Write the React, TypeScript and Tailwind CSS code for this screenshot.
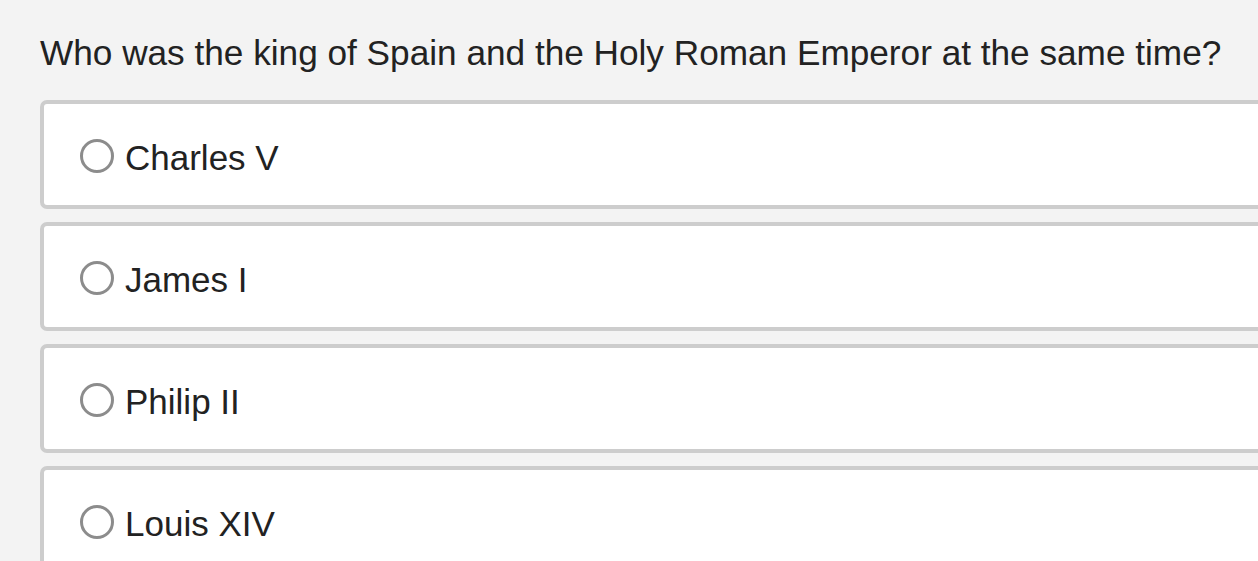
import React from 'react';

const options = ['Charles V', 'James I', 'Philip II', 'Louis XIV'];

const Radio: React.FC = () => (
  <span className="block w-[34px] h-[34px] rounded-full border-[3px] border-[#8c8c8c] bg-white shrink-0" />
);

const App: React.FC = () => {
  return (
    <div
      className="w-[1258px] h-[561px] overflow-hidden bg-[#f3f3f3] text-[#222]"
      style={{ fontFamily: '"Liberation Sans", Arial, sans-serif' }}
    >
      <div className="pl-[40px] pt-[29px]">
        <h1 className="text-[35.2px] leading-[48px] font-normal">
          Who was the king of Spain and the Holy Roman Emperor at the same time?
        </h1>
        <div className="mt-[23px] flex flex-col gap-[13px]">
          {options.map((o) => (
            <label
              key={o}
              className="w-[1260px] h-[109px] flex items-center gap-[11px] pl-[36px] pt-[2px] bg-white border-4 border-[#cdcdcd] rounded-[7px]"
            >
              <Radio />
              <span className="text-[35px] leading-none pt-[4px]">{o}</span>
            </label>
          ))}
        </div>
      </div>
    </div>
  );
};

export default App;
